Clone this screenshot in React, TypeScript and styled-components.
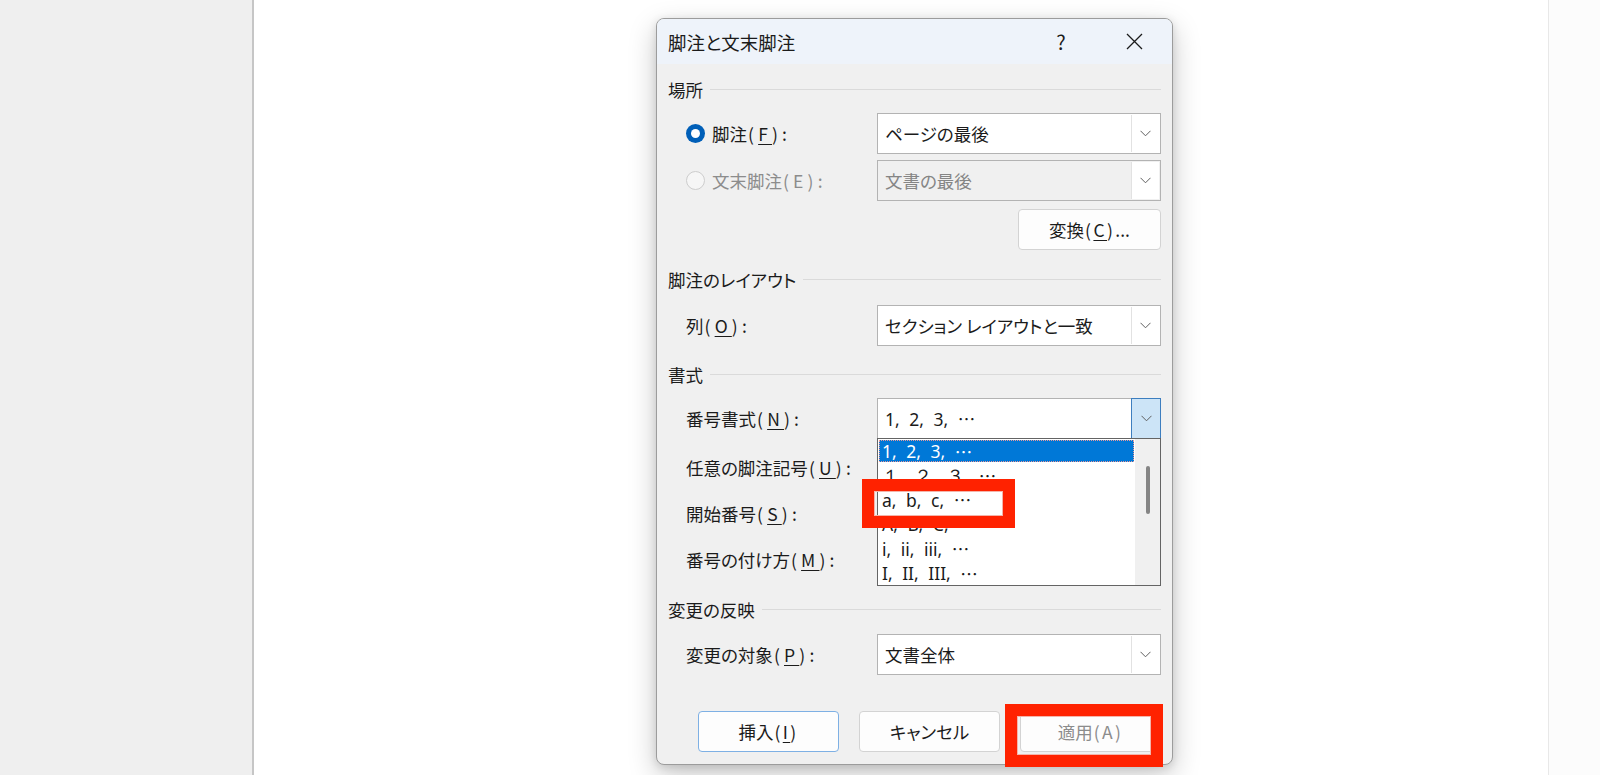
import React from 'react';
import styled, { createGlobalStyle } from 'styled-components';

const Global = createGlobalStyle`
  html, body { margin: 0; padding: 0; }
  body {
    width: 1600px;
    height: 775px;
    overflow: hidden;
    background: #efefef;
    font-family: "Noto Sans CJK JP", "Noto Sans", sans-serif;
    font-feature-settings: "palt";
  }
`;

const Screen = styled.div`
  display: flex;
  width: 1600px;
  height: 775px;
`;

const Backdrop = styled.div`
  width: 252px;
  flex: none;
  background: #efefef;
`;

const Page = styled.div`
  width: 1297px;
  flex: none;
  box-sizing: border-box;
  background: #ffffff;
  border-left: 2px solid #c6c6c6;
  border-right: 1px solid #e8e8e8;
`;

const RightMargin = styled.div`
  flex: 1;
  background: #fcfcfc;
`;

const Dialog = styled.div`
  box-sizing: border-box;
  width: 517px;
  height: 747px;
  margin: 18px 0 0 402px;
  background: #f0f0f0;
  border: 1px solid #9c9c9c;
  border-radius: 8px;
  box-shadow: 0 10px 28px rgba(0, 0, 0, 0.22), 0 2px 8px rgba(0, 0, 0, 0.12);
  display: flex;
  flex-direction: column;
  color: #1b1b1b;
`;

const TitleBar = styled.div`
  height: 45px;
  flex: none;
  display: flex;
  align-items: center;
  padding-left: 11px;
  background: #eef3fa;
  border-radius: 7px 7px 0 0;
`;

const Title = styled.div`
  flex: 1;
  font-size: 18.5px;
`;

const TitleButton = styled.div<{ $w: number }>`
  width: ${(p) => p.$w}px;
  height: 45px;
  display: flex;
  align-items: center;
  justify-content: center;
  font-size: 20px;
  color: #1b1b1b;
`;

const Body = styled.div`
  flex: 1;
  display: flex;
  flex-direction: column;
  padding: 0 11px;
`;

const Heading = styled.div<{ $mt: number }>`
  display: flex;
  align-items: center;
  height: 24px;
  margin-top: ${(p) => p.$mt}px;
  font-size: 17.5px;
  &::after {
    content: '';
    flex: 1;
    height: 1px;
    background: #dadada;
    margin-left: 7px;
  }
`;

const Row = styled.div<{ $mt: number }>`
  display: grid;
  grid-template-columns: 209px 1fr;
  align-items: center;
  height: 41px;
  margin-top: ${(p) => p.$mt}px;
`;

const Label = styled.div<{ $disabled?: boolean }>`
  display: flex;
  align-items: center;
  gap: 7px;
  padding-left: 18px;
  font-size: 17.5px;
  white-space: nowrap;
  color: ${(p) => (p.$disabled ? '#8c8c8c' : '#1b1b1b')};
`;

const Key = styled.span<{ $wide?: boolean }>`
  letter-spacing: ${(p) => (p.$wide ? 4.2 : 2.4)}px;
  margin-left: 1px;
  u {
    text-decoration-thickness: 1px;
    text-underline-offset: 3px;
  }
`;

const Latin = styled.span`
  font-family: "Noto Sans", "Open Sans", sans-serif;
  word-spacing: 5px;
`;

const Ellipsis = styled.span`
  font-family: "Noto Sans CJK JP", sans-serif;
`;

const Radio = styled.span<{ $checked?: boolean }>`
  position: relative;
  flex: none;
  width: 19px;
  height: 19px;
  box-sizing: border-box;
  border-radius: 50%;
  background: ${(p) => (p.$checked ? '#005fb8' : '#f6f6f6')};
  border: ${(p) => (p.$checked ? 'none' : '1px solid #cdcdcd')};
  &::after {
    content: '';
    display: ${(p) => (p.$checked ? 'block' : 'none')};
    position: absolute;
    left: 5px;
    top: 5px;
    width: 9px;
    height: 9px;
    border-radius: 50%;
    background: #ffffff;
  }
`;

const Combo = styled.div<{ $disabled?: boolean }>`
  position: relative;
  display: flex;
  height: 41px;
  box-sizing: border-box;
  border: 1px solid #b3b3b3;
  background: ${(p) => (p.$disabled ? '#f0f0f0' : '#ffffff')};
`;

const ComboText = styled.div<{ $disabled?: boolean }>`
  flex: 1;
  display: flex;
  align-items: center;
  padding-left: 7px;
  font-size: 17.5px;
  color: ${(p) => (p.$disabled ? '#858585' : '#1b1b1b')};
  white-space: pre;
`;

const DropButton = styled.div<{ $active?: boolean }>`
  width: ${(p) => (p.$active ? 30 : 28)}px;
  margin: ${(p) => (p.$active ? '-1px -1px -1px 0' : '1px')};
  box-sizing: border-box;
  display: flex;
  align-items: center;
  justify-content: center;
  background: ${(p) => (p.$active ? '#cce4f7' : '#ffffff')};
  border: ${(p) => (p.$active ? '1px solid #3d7ebf' : 'none')};
  border-left: 1px solid ${(p) => (p.$active ? '#3d7ebf' : '#e2e2e2')};
`;

const DropList = styled.div`
  position: absolute;
  left: -1px;
  right: -1px;
  top: 100%;
  height: 148px;
  box-sizing: border-box;
  border: 1px solid #646464;
  background: #ffffff;
  display: flex;
  z-index: 2;
`;

const Items = styled.div`
  flex: 1;
  display: flex;
  flex-direction: column;
  overflow: hidden;
`;

const Item = styled.div<{ $selected?: boolean }>`
  flex: none;
  display: flex;
  align-items: center;
  height: ${(p) => (p.$selected ? 22 : 24.5)}px;
  margin: ${(p) => (p.$selected ? '1px 1px 1px 1px' : '0')};
  padding-left: ${(p) => (p.$selected ? 3 : 4)}px;
  font-size: 17.5px;
  white-space: pre;
  color: ${(p) => (p.$selected ? '#ffffff' : '#1b1b1b')};
  background: ${(p) => (p.$selected ? '#0078d7' : 'transparent')};
  outline: ${(p) => (p.$selected ? '1px dotted #e89a9a' : 'none')};
  outline-offset: -1px;
`;

const ScrollTrack = styled.div`
  width: 25px;
  flex: none;
  background: #f0f0f0;
  display: flex;
  justify-content: center;
  padding-top: 27px;
`;

const ScrollThumb = styled.div`
  width: 4px;
  height: 48px;
  border-radius: 2px;
  background: #858585;
`;

const Annotation = styled.div<{ $l: number; $t: number; $w: number; $h: number }>`
  position: absolute;
  left: ${(p) => p.$l}px;
  top: ${(p) => p.$t}px;
  width: ${(p) => p.$w}px;
  height: ${(p) => p.$h}px;
  box-sizing: border-box;
  border: 12px solid #ff2200;
  box-shadow: inset 0 0 0 1px #f4b4aa;
  pointer-events: none;
  z-index: 3;
`;

const ButtonRow = styled.div<{ $mt: number; $end?: boolean }>`
  display: flex;
  gap: 20px;
  justify-content: ${(p) => (p.$end ? 'flex-end' : 'flex-start')};
  padding-left: ${(p) => (p.$end ? 0 : 30)}px;
  margin-top: ${(p) => p.$mt}px;
`;

const ButtonWrap = styled.div`
  position: relative;
`;

const Button = styled.div<{ $primary?: boolean; $disabled?: boolean; $w?: number }>`
  width: ${(p) => p.$w ?? 141}px;
  height: 41px;
  box-sizing: border-box;
  display: flex;
  align-items: center;
  justify-content: center;
  border-radius: 4px;
  background: #fdfdfd;
  border: 1px solid ${(p) => (p.$primary ? '#7eb0e4' : '#d3d3d3')};
  font-size: 17.5px;
  white-space: nowrap;
  color: ${(p) => (p.$disabled ? '#8c8c8c' : '#1b1b1b')};
`;

const Chevron = () => (
  <svg width="11" height="7" viewBox="0 0 11 7">
    <polyline points="0.5,0.8 5.5,5.8 10.5,0.8" fill="none" stroke="#5f5f5f" strokeWidth="1" />
  </svg>
);

const CloseIcon = () => (
  <svg width="17" height="17" viewBox="0 0 17 17">
    <path d="M1 1 L16 16 M16 1 L1 16" stroke="#1b1b1b" strokeWidth="1.3" fill="none" />
  </svg>
);

const FormatText = ({ text }: { text: string }) => {
  const head = text.replace('…', '');
  return (
    <>
      <Latin>{head}</Latin>
      <Ellipsis>…</Ellipsis>
    </>
  );
};

const formats = ['１, ２, ３, …', 'a, b, c, …', 'A, B, C, …', 'i, ii, iii, …', 'I, II, III, …'];

export default function App() {
  return (
    <>
      <Global />
      <Screen>
        <Backdrop />
        <Page>
          <Dialog>
            <TitleBar>
              <Title>脚注と文末脚注</Title>
              <TitleButton $w={40}>?</TitleButton>
              <TitleButton $w={23} />
              <TitleButton $w={60}>
                <CloseIcon />
              </TitleButton>
              <TitleButton $w={8} />
            </TitleBar>
            <Body>
              <Heading $mt={13}>場所</Heading>
              <Row $mt={12}>
                <Label>
                  <Radio $checked />
                  <span>
                    脚注<Key $wide>(<u>F</u>):</Key>
                  </span>
                </Label>
                <Combo>
                  <ComboText>ページの最後</ComboText>
                  <DropButton>
                    <Chevron />
                  </DropButton>
                </Combo>
              </Row>
              <Row $mt={6}>
                <Label $disabled>
                  <Radio />
                  <span>
                    文末脚注<Key $wide>(E):</Key>
                  </span>
                </Label>
                <Combo $disabled>
                  <ComboText $disabled>文書の最後</ComboText>
                  <DropButton>
                    <Chevron />
                  </DropButton>
                </Combo>
              </Row>
              <ButtonRow $mt={8} $end>
                <Button $w={143}>
                  変換<Key>(<u>C</u>)</Key>...
                </Button>
              </ButtonRow>

              <Heading $mt={17}>脚注のレイアウト</Heading>
              <Row $mt={14}>
                <Label>
                  <span>
                    列<Key $wide>(<u>O</u>):</Key>
                  </span>
                </Label>
                <Combo>
                  <ComboText>セクション レイアウトと一致</ComboText>
                  <DropButton>
                    <Chevron />
                  </DropButton>
                </Combo>
              </Row>

              <Heading $mt={16}>書式</Heading>
              <Row $mt={12}>
                <Label>
                  <span>
                    番号書式<Key $wide>(<u>N</u>):</Key>
                  </span>
                </Label>
                <Combo>
                  <ComboText>
                    <FormatText text="1, 2, 3, …" />
                  </ComboText>
                  <DropButton $active>
                    <Chevron />
                  </DropButton>
                  <DropList>
                    <Items>
                      <Item $selected>
                        <FormatText text="1, 2, 3, …" />
                      </Item>
                      {formats.map((f) => (
                        <Item key={f}>
                          <FormatText text={f} />
                        </Item>
                      ))}
                    </Items>
                    <ScrollTrack>
                      <ScrollThumb />
                    </ScrollTrack>
                    <Annotation $l={-16} $t={40} $w={153} $h={49} />
                  </DropList>
                </Combo>
              </Row>
              <Row $mt={8}>
                <Label>
                  <span>
                    任意の脚注記号<Key $wide>(<u>U</u>):</Key>
                  </span>
                </Label>
                <Combo />
              </Row>
              <Row $mt={5}>
                <Label>
                  <span>
                    開始番号<Key $wide>(<u>S</u>):</Key>
                  </span>
                </Label>
                <Combo />
              </Row>
              <Row $mt={5}>
                <Label>
                  <span>
                    番号の付け方<Key $wide>(<u>M</u>):</Key>
                  </span>
                </Label>
                <Combo />
              </Row>

              <Heading $mt={17}>変更の反映</Heading>
              <Row $mt={13}>
                <Label>
                  <span>
                    変更の対象<Key $wide>(<u>P</u>):</Key>
                  </span>
                </Label>
                <Combo>
                  <ComboText>文書全体</ComboText>
                  <DropButton>
                    <Chevron />
                  </DropButton>
                </Combo>
              </Row>

              <ButtonRow $mt={36}>
                <Button $primary>
                  挿入<Key>(<u>I</u>)</Key>
                </Button>
                <Button>キャンセル</Button>
                <ButtonWrap>
                  <Button $disabled>
                    適用<Key>(A)</Key>
                  </Button>
                  <Annotation $l={-15} $t={-7} $w={158} $h={63} />
                </ButtonWrap>
              </ButtonRow>
            </Body>
          </Dialog>
        </Page>
        <RightMargin />
      </Screen>
    </>
  );
}
